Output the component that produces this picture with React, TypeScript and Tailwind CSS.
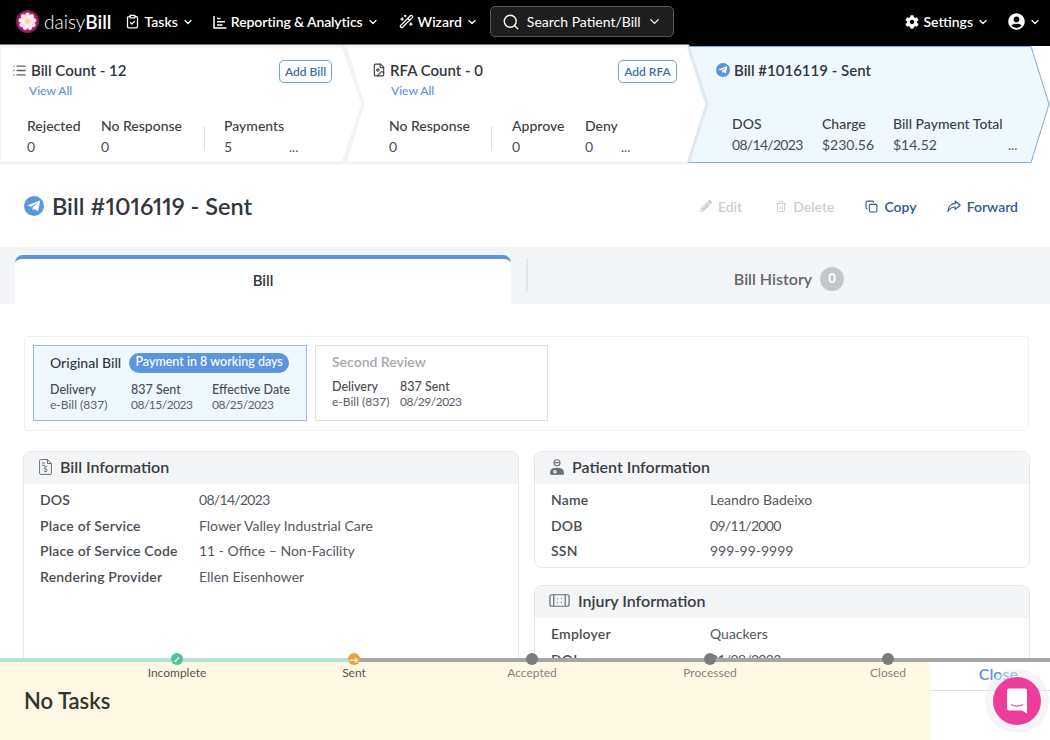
import { Bandage, ChevronDown, ClipboardCheck, Copy, FileImage, List, Search, Trash2, WandSparkles } from "lucide-react";
import { FaCog, FaPencilAlt, FaUserCircle, FaTelegramPlane } from "react-icons/fa";
import type { ReactNode } from "react";

function Chevron({ className = "h-3 w-3" }: { className?: string }) {
  return <ChevronDown className={className} strokeWidth={2.5} />;
}

function DaisyLogo() {
  const petals = [0, 40, 80, 120, 160, 200, 240, 280, 320];
  return (
    <svg viewBox="0 0 24 24" className="h-[23px] w-[23px]">
      <defs>
        <radialGradient id="daisy-bg">
          <stop offset="55%" stopColor="#e0338f" />
          <stop offset="100%" stopColor="#7a1550" />
        </radialGradient>
      </defs>
      <circle cx="12" cy="12" r="12" fill="url(#daisy-bg)" />
      {petals.map((a) => (
        <ellipse key={a} cx="12" cy="6.6" rx="2.5" ry="4" fill="#fbe6f2" transform={`rotate(${a} 12 12)`} />
      ))}
      <circle cx="12" cy="12" r="2.6" fill="#f6d77a" />
    </svg>
  );
}

function PlaneBadge({ className }: { className: string }) {
  return (
    <span className={`flex shrink-0 items-center justify-center rounded-full bg-[#5b96dc] text-white ${className}`}>
      <FaTelegramPlane className="h-[70%] w-[70%]" />
    </span>
  );
}

function ReportIcon() {
  return (
    <svg viewBox="0 0 14 14" className="h-[14px] w-[14px]" fill="none" stroke="currentColor" strokeWidth="1.5">
      <path d="M1 1v12h12.5M4 3.5h3.5M4 6.7h8M4 9.9h5.5" />
    </svg>
  );
}

function BillFileIcon() {
  return (
    <svg viewBox="0 0 13 16" className="h-4 w-[13px]" fill="none" stroke="#6b6f76" strokeWidth="1">
      <path d="M1.5.6h7l3.9 3.9v9.6a1.3 1.3 0 0 1-1.3 1.3H1.5A1.3 1.3 0 0 1 .6 14.1V1.6A1 1 0 0 1 1.5.6z" />
      <path d="M8.5.6v3.9h3.9M3 4h3M3 6.3h3" />
      <text x="6.5" y="13.4" fontSize="7" textAnchor="middle" fill="#6b6f76" stroke="none">$</text>
    </svg>
  );
}

function PatientIcon() {
  return (
    <svg viewBox="0 0 14 16" className="h-4 w-[14px]" fill="none" stroke="#6b6f76" strokeWidth="1.1">
      <circle cx="7" cy="3.8" r="3" />
      <path d="M4.5 3.6h5" />
      <path d="M.8 15.2v-2.2c0-2.2 2.6-3.6 6.2-3.6s6.2 1.4 6.2 3.6v2.2z" fill="#6b6f76" />
      <circle cx="5" cy="12.8" r="1.2" stroke="#fff" />
    </svg>
  );
}

function ShareIcon() {
  return (
    <svg viewBox="0 0 14 13" className="h-[13px] w-[14px]" fill="none" stroke="currentColor" strokeWidth="1.2" strokeLinejoin="round">
      <path d="M8.200 1l5 4.200-5 4.200V7C4.800 7 2.600 8.300 1 11.500 1 7.400 3.500 3.700 8.200 3.400z" />
    </svg>
  );
}

function Stat({ label, value, className }: { label: string; value: string; className: string }) {
  return (
    <div className={`shrink-0 ${className}`}>
      <div className="text-[14px] leading-[18px] font-medium text-[#3c3f46]">{label}</div>
      <div className={`mt-[3px] text-[14px] leading-[18px] text-[#4a4d54] ${value.includes("/") ? "tracking-[-0.7px]" : ""}`}>{value}</div>
    </div>
  );
}

function AddButton({ children, className }: { children: ReactNode; className: string }) {
  return (
    <span className={`flex h-[23px] items-center justify-center rounded-[5px] border border-[#7fa3cf] bg-white text-[12px] font-semibold text-[#3a6cab] shadow-[0_0_3px_#dcebfa] ${className}`}>
      {children}
    </span>
  );
}

function StepTitle({ icon, children }: { icon: ReactNode; children: ReactNode }) {
  return (
    <div className="flex items-center gap-[4px] text-[15px] leading-5 font-semibold text-[#33363d]">
      {icon}
      <span>{children}</span>
    </div>
  );
}

function Row({ label, value }: { label: string; value: string }) {
  return (
    <div className="flex h-[25.6px] items-center text-[14px]">
      <span className="w-[159px] shrink-0 font-semibold tracking-[0.2px] text-[#4a4d54]">{label}</span>
      <span className={`text-[#55585e] ${value.includes("/") ? "tracking-[-0.7px]" : ""}`}>{value}</span>
    </div>
  );
}

function Panel({ icon, title, className, children }: { icon: ReactNode; title: string; className: string; children: ReactNode }) {
  return (
    <section className={`overflow-hidden rounded-t-[8px] border border-[#e6e7ea] ${className}`}>
      <div className="flex h-[32px] items-center gap-[8px] bg-[#f4f5f7] px-[15px] pb-[2px] text-[16px] font-semibold text-[#3a3d44]">
        {icon}
        <span>{title}</span>
      </div>
      <div className="px-[16px] pt-[3px] pb-[3px]">{children}</div>
    </section>
  );
}

function SubmissionField({ label, value, className }: { label: string; value: string; className: string }) {
  return (
    <div className={`shrink-0 leading-[15px] ${className}`}>
      <div className="text-[12.5px] font-medium text-[#4a4d54]">{label}</div>
      <div className={`text-[12px] text-[#5d6066] ${value.includes("/") ? "tracking-[-0.5px]" : ""}`}>{value}</div>
    </div>
  );
}

function Milestone({ label, left, kind }: { label: string; left: string; kind: "done" | "sent" | "todo" }) {
  const color = kind === "done" ? "bg-[#4fc29c]" : kind === "sent" ? "bg-[#f0a040]" : "bg-[#7c7c7e]";
  return (
    <div className={`absolute top-[-5px] flex w-[100px] -translate-x-1/2 flex-col items-center ${left}`}>
      <span className={`flex h-[12px] w-[12px] items-center justify-center rounded-full text-[9px] leading-none font-bold text-white ${color}`}>
        {kind === "done" ? "✓" : kind === "sent" ? "→" : ""}
      </span>
      <span className={`mt-[-1px] text-[12px] leading-[18px] ${kind === "todo" ? "text-[#85857f]" : "text-[#55554f]"}`}>{label}</span>
    </div>
  );
}

export default function App() {
  return (
    <div className="relative h-[740px] w-[1050px] overflow-hidden bg-white font-['Lato','Noto_Sans',sans-serif] text-[#33363d]">
      {/* top nav */}
      <header className="flex h-[46px] items-center bg-black pb-[3px] text-white">
        <div className="ml-[16px] flex items-center gap-[5px]">
          <DaisyLogo />
          <span className="text-[19px] leading-none font-light">daisy<span className="font-semibold">Bill</span></span>
        </div>
        <div className="ml-[14px] flex items-center gap-[4px] text-[14px] font-semibold">
          <ClipboardCheck className="h-[15px] w-[15px]" />
          <span>Tasks</span>
          <Chevron />
        </div>
        <div className="ml-[19px] flex items-center gap-[4px] text-[14px] font-semibold">
          <ReportIcon />
          <span className="tracking-[-0.1px]">Reporting &amp; Analytics</span>
          <Chevron />
        </div>
        <div className="ml-[20px] flex items-center gap-[4px] text-[14px] font-semibold">
          <WandSparkles className="h-[15px] w-[15px]" />
          <span>Wizard</span>
          <Chevron />
        </div>
        <div className="ml-[12px] flex h-[31px] w-[184px] shrink-0 items-center rounded-[5px] border border-[#5a5a5a] bg-[#1e1e1e] pr-[11px] pl-[11px]">
          <Search className="h-[18px] w-[18px]" strokeWidth={1.8} />
          <span className="ml-[7px] text-[14px] whitespace-nowrap">Search Patient/Bill</span>
          <ChevronDown className="ml-auto h-[15px] w-[15px]" strokeWidth={2} />
        </div>
        <div className="ml-auto flex items-center gap-[4px] text-[14px] font-semibold">
          <FaCog className="h-[14px] w-[14px]" />
          <span>Settings</span>
          <Chevron />
        </div>
        <div className="mr-[9px] ml-[19px] flex items-center gap-[4px]">
          <FaUserCircle className="h-[17px] w-[17px]" />
          <Chevron />
        </div>
      </header>

      {/* step chevrons */}
      <div className="flex h-[119px] bg-white">
        <div className="relative w-[345px] shrink-0">
          <svg className="absolute inset-0 h-full w-full overflow-visible">
            <path d="M0 0 H343 L363 58 L343 117 H0 Z" fill="#ffffff" stroke="#f2f3f5" strokeWidth="3" strokeLinejoin="round" />
          </svg>
          <div className="relative pt-[14px] pl-[12px]">
            <div className="flex items-start justify-between pr-[13px]">
              <StepTitle icon={<List className="h-[15px] w-[15px] text-[#5a5d63]" strokeWidth={2.2} />}>Bill Count - 12</StepTitle>
              <AddButton className="w-[53px]">Add Bill</AddButton>
            </div>
            <div className="mt-0 ml-[17px] text-[12px] leading-4 font-medium text-[#5b96dc]">View All</div>
            <div className="mt-[18px] ml-[15px] flex items-start">
              <Stat label="Rejected" value="0" className="w-[74px]" />
              <Stat label="No Response" value="0" className="w-[103px]" />
              <div className="mt-[9px] h-[25px] w-px shrink-0 bg-[#dfe1e5]" />
              <Stat label="Payments" value="5" className="ml-[19px] w-[65px]" />
              <span className="mt-[21px] text-[13px] leading-[18px] text-[#55585e]">...</span>
            </div>
          </div>
        </div>
        <div className="relative w-[343px] shrink-0">
          <svg className="absolute inset-0 h-full w-full overflow-visible">
            <path d="M0 0 H343 L363 58 L343 117 H0 L18 58 Z" fill="#ffffff" stroke="#f2f3f5" strokeWidth="3" strokeLinejoin="round" />
          </svg>
          <div className="relative pt-[14px] pl-[27px]">
            <div className="flex items-start justify-between pr-[11px]">
              <StepTitle icon={<FileImage className="h-[16px] w-[14px] text-[#3f4248]" />}>RFA Count - 0</StepTitle>
              <AddButton className="w-[59px]">Add RFA</AddButton>
            </div>
            <div className="mt-0 ml-[19px] text-[12px] leading-4 font-medium text-[#5b96dc]">View All</div>
            <div className="mt-[18px] ml-[17px] flex items-start">
              <Stat label="No Response" value="0" className="w-[102px]" />
              <div className="mt-[9px] h-[25px] w-px shrink-0 bg-[#dfe1e5]" />
              <Stat label="Approve" value="0" className="ml-[20px] w-[73px]" />
              <Stat label="Deny" value="0" className="w-[36px]" />
              <span className="mt-[21px] text-[13px] leading-[18px] text-[#55585e]">...</span>
            </div>
          </div>
        </div>
        <div className="relative w-[362px] shrink-0">
          <svg className="absolute inset-0 h-full w-full overflow-visible">
            <path d="M0.500 0.500 H343 L361 58 L343 116.500 H0.500 L19 58 Z" fill="#eff8ff" stroke="#7ea9da" strokeLinejoin="round" />
            <path d="M0.500 1 L19 58 L0.500 116" fill="none" stroke="#e2e8f0" strokeWidth="3" />
          </svg>
          <div className="relative pt-[14px] pl-[28px]">
            <StepTitle icon={<PlaneBadge className="h-[14px] w-[14px]" />}>Bill #1016119 - Sent</StepTitle>
            <div className="mt-[35px] ml-[16px] flex items-start">
              <Stat label="DOS" value="08/14/2023" className="w-[90px]" />
              <Stat label="Charge" value="$230.56" className="w-[71px]" />
              <Stat label="Bill Payment Total" value="$14.52" className="w-[115px]" />
              <span className="mt-[21px] text-[13px] leading-[18px] text-[#55585e]">...</span>
            </div>
          </div>
        </div>
      </div>

      {/* bill title and actions */}
      <div className="flex h-[82px] items-center pr-[32px] pl-[24px]">
        <PlaneBadge className="h-[20px] w-[20px]" />
        <h1 className="ml-[8px] pt-[1px] text-[23.5px] font-semibold text-[#33363d] proportional-nums">Bill #1016119 - Sent</h1>
        <div className="ml-auto flex items-center text-[14px] font-semibold">
          <span className="flex items-center gap-[6px] text-[#cbced2]"><FaPencilAlt className="h-[12px] w-[12px]" />Edit</span>
          <span className="ml-[33px] flex items-center gap-[6px] text-[#cbced2]"><Trash2 className="h-[13px] w-[12px]" />Delete</span>
          <span className="ml-[31px] flex items-center gap-[6px] text-[#32598f]"><Copy className="h-[13px] w-[13px]" />Copy</span>
          <span className="ml-[30px] flex items-center gap-[6px] text-[#32598f]"><ShareIcon />Forward</span>
        </div>
      </div>

      {/* tabs */}
      <div className="flex h-[57px] bg-[#f4f5f7] pt-[8px] pl-[15px]">
        <div className="flex w-[496px] items-center justify-center rounded-t-[8px] border-t-[4px] border-[#5b96dc] bg-white pb-[3px] text-[15px] font-semibold text-[#33363d]">Bill</div>
        <div className="mt-[4px] ml-[15px] h-[33px] w-[2px] bg-[#e3e5e9]" />
        <div className="flex flex-1 items-center justify-center gap-[8px] pb-[1px] text-[16px] font-semibold text-[#63666e]">
          <span>Bill History</span>
          <span className="flex h-[24px] w-[24px] items-center justify-center rounded-full bg-[#c3c7cc] text-[13px] font-bold text-white">0</span>
        </div>
      </div>

      {/* submissions */}
      <div className="mt-[32px] ml-[24px] flex h-[95px] w-[1005px] gap-[8px] rounded-[3px] border border-[#f0f0f2] py-[8px] pl-[8px]">
        <div className="h-[76px] w-[274px] border border-[#93bbe8] bg-[#eff8ff] pt-[6px] pl-[16px]">
          <div className="flex items-center gap-[8px]">
            <span className="text-[14px] font-medium text-[#33363d]">Original Bill</span>
            <span className="flex h-[20px] w-[160px] items-center justify-center rounded-full bg-[#5b96dc] text-[12.5px] font-medium whitespace-nowrap text-white">Payment in 8 working days</span>
          </div>
          <div className="mt-[9px] flex">
            <SubmissionField label="Delivery" value="e-Bill (837)" className="w-[81px]" />
            <SubmissionField label="837 Sent" value="08/15/2023" className="w-[81px]" />
            <SubmissionField label="Effective Date" value="08/25/2023" className="w-[85px]" />
          </div>
        </div>
        <div className="h-[76px] w-[233px] border border-[#dfe1e5] pt-[7px] pl-[16px]">
          <div className="text-[14px] leading-[18px] font-semibold text-[#a6a9ae]">Second Review</div>
          <div className="mt-[8px] flex">
            <SubmissionField label="Delivery" value="e-Bill (837)" className="w-[68px]" />
            <SubmissionField label="837 Sent" value="08/29/2023" className="w-[81px]" />
          </div>
        </div>
      </div>

      {/* info panels */}
      <div className="mt-[20px] ml-[23px] flex gap-[15px]">
        <Panel icon={<BillFileIcon />} title="Bill Information" className="h-[300px] w-[496px]">
          <Row label="DOS" value="08/14/2023" />
          <Row label="Place of Service" value="Flower Valley Industrial Care" />
          <Row label="Place of Service Code" value="11 - Office – Non-Facility" />
          <Row label="Rendering Provider" value="Ellen Eisenhower" />
        </Panel>
        <div className="flex w-[496px] flex-col gap-[17px]">
          <Panel icon={<PatientIcon />} title="Patient Information" className="rounded-b-[8px]">
            <Row label="Name" value="Leandro Badeixo" />
            <Row label="DOB" value="09/11/2000" />
            <Row label="SSN" value="999-99-9999" />
          </Panel>
          <Panel icon={<Bandage className="mr-[-1px] ml-[-2px] h-[23px] w-[23px] text-[#6b6f76]" strokeWidth={1.3} />} title="Injury Information" className="">
            <Row label="Employer" value="Quackers" />
            <Row label="DOI" value="01/08/2023" />
          </Panel>
        </div>
      </div>

      {/* bottom tracker, fixed over the page */}
      <div className="absolute inset-x-0 bottom-0 h-[82px]">
        <div className="flex h-[4px]">
          <div className="w-[354px] bg-[#b5e4d6]" />
          <div className="flex-1 bg-[#a6a6a8]" />
        </div>
        <div className="flex h-[78px] bg-white">
          <div className="flex w-[930px] items-center bg-[#fff8e5] pb-[2px] pl-[24px] text-[22px] font-semibold text-[#33332e]">No Tasks</div>
          <div className="flex-1">
            <div className="flex h-[29px] items-start justify-end border-b border-[#dddfe2] pr-[32px] text-[16px] leading-6 font-semibold text-[#5b96dc]">Close</div>
          </div>
        </div>
        <Milestone label="Incomplete" left="left-[177px]" kind="done" />
        <Milestone label="Sent" left="left-[354px]" kind="sent" />
        <Milestone label="Accepted" left="left-[532px]" kind="todo" />
        <Milestone label="Processed" left="left-[710px]" kind="todo" />
        <Milestone label="Closed" left="left-[888px]" kind="todo" />
      </div>

      {/* chat launcher */}
      <div className="absolute top-[677px] left-[993px] flex h-[48px] w-[48px] items-center justify-center rounded-full bg-[#ec3d9b] shadow-[0_0_0_8px_rgba(235,236,240,0.5)]">
        <svg viewBox="0 0 24 24" className="h-[30px] w-[30px]">
          <path d="M4 3.500A1.500 1.500 0 0 1 5.500 2h13A1.500 1.500 0 0 1 20 3.500V22l-4-2.500H5.500A1.500 1.500 0 0 1 4 18z" fill="#fff" />
          <path d="M7.500 15c2.500 1.500 6.500 1.500 9 0" stroke="#ec3d9b" strokeWidth="0.900" fill="none" strokeLinecap="round" />
        </svg>
      </div>
    </div>
  );
}
